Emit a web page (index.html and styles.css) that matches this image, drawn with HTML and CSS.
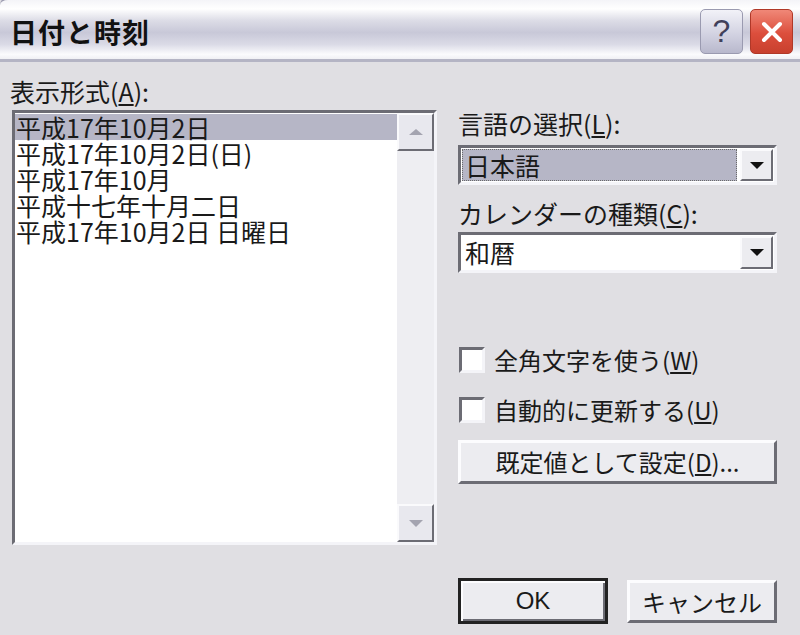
FILE: index.html
```html
<!DOCTYPE html>
<html lang="ja">
<head>
    <meta charset="UTF-8">
    <title>日付と時刻</title>
    <link rel="stylesheet" href="styles.css">
</head>
<body>
<div class="window">
    <div class="titlebar">
        <span class="title">日付と時刻</span>
        <div class="caption-buttons">
            <div class="cap-btn help">?</div>
            <div class="cap-btn close">
                <svg width="26" height="26" viewBox="0 0 26 26">
                    <path d="M5 5 L21 21 M21 5 L5 21" stroke="#fff" stroke-width="4" stroke-linecap="round"/>
                </svg>
            </div>
        </div>
    </div>

    <div class="content">
        <div class="left">
            <div class="label">表示形式(<u>A</u>):</div>
            <div class="listbox">
                <div class="items">
                    <div class="item selected">平成17年10月2日</div>
                    <div class="item">平成17年10月2日(日)</div>
                    <div class="item">平成17年10月</div>
                    <div class="item">平成十七年十月二日</div>
                    <div class="item">平成17年10月2日 日曜日</div>
                </div>
                <div class="scrollbar">
                    <div class="scroll-btn"><span class="arrow-up"></span></div>
                    <div class="scroll-track"></div>
                    <div class="scroll-btn"><span class="arrow-down grey"></span></div>
                </div>
            </div>
        </div>

        <div class="right">
            <div class="label lang-label">言語の選択(<u>L</u>):</div>
            <div class="combo lang-combo">
                <div class="combo-value focused">日本語</div>
                <div class="combo-btn"><span class="arrow-down"></span></div>
            </div>

            <div class="label cal-label">カレンダーの種類(<u>C</u>):</div>
            <div class="combo cal-combo">
                <div class="combo-value">和暦</div>
                <div class="combo-btn"><span class="arrow-down"></span></div>
            </div>

            <div class="check-row first">
                <span class="checkbox"></span>
                <span>全角文字を使う(<u>W</u>)</span>
            </div>
            <div class="check-row">
                <span class="checkbox"></span>
                <span>自動的に更新する(<u>U</u>)</span>
            </div>

            <button class="btn wide">既定値として設定(<u>D</u>)...</button>

            <div class="footer">
                <button class="btn ok">OK</button>
                <button class="btn cancel">キャンセル</button>
            </div>
        </div>
    </div>
</div>
</body>
</html>
```

FILE: styles.css
```css
body {
    margin: 0;
    background-color: #e0dfe3;
    font-family: "Noto Sans CJK JP", "Liberation Sans", sans-serif;
    color: #1a1a1a;
}

.window {
    width: 800px;
    height: 635px;
    overflow: hidden;
}

/* title bar, silver XP style */
.titlebar {
    height: 65px;
    margin-top: -3px;
    box-sizing: border-box;
    border-top: 3px solid #9c9cb0;
    border-bottom: 3px solid #b4b4c4;
    border-top-left-radius: 8px;
    background: linear-gradient(#f4f4f8 0%, #ffffff 15%, #dcdce6 35%, #c8c8d8 55%, #dadae6 75%, #fbfbfd 92%, #f0f0f4 100%);
    display: flex;
    align-items: center;
    justify-content: space-between;
}

.title {
    font-size: 27px;
    font-weight: bold;
    margin-left: 10px;
    margin-top: 4px;
    letter-spacing: 1px;
    color: #111;
}

.caption-buttons {
    display: flex;
    gap: 7px;
    margin-right: 7px;
    margin-top: 4px;
}

.cap-btn {
    width: 43px;
    height: 45px;
    border-radius: 5px;
    box-sizing: border-box;
    display: flex;
    align-items: center;
    justify-content: center;
}

.help {
    background: linear-gradient(#f2f2f8, #d0d0e0 60%, #b8b8cc);
    border: 1px solid #9a9ab0;
    font-size: 32px;
    color: #40405a;
    font-family: "Liberation Sans", sans-serif;
}

.close {
    background: linear-gradient(#f08878, #dc4e3c 55%, #c8402e);
    border: 1px solid #b03828;
}

/* dialog body */
.content {
    display: flex;
    padding: 14px 0 0 10px;
}

.left {
    width: 427px;
}

.label {
    font-size: 25px;
    line-height: 30px;
    white-space: nowrap;
}

.listbox {
    margin: 4px 0 0 2px;
    width: 425px;
    height: 435px;
    box-sizing: border-box;
    border: 3px solid;
    border-color: #6c6c74 #f4f4f8 #f4f4f8 #6c6c74;
    background: #fff;
    display: flex;
}

.items {
    flex: 1;
    padding-top: 1px;
}

.item {
    font-size: 25px;
    line-height: 26px;
    height: 26px;
    padding-left: 1px;
    white-space: nowrap;
}

.item.selected {
    background-color: #b6b6c6;
}

.scrollbar {
    width: 37px;
    display: flex;
    flex-direction: column;
    background: #eeeef2;
}

.scroll-track {
    flex: 1;
}

.scroll-btn {
    height: 38px;
    box-sizing: border-box;
    border: 2px solid;
    border-color: #fafafc #6c6c74 #6c6c74 #fafafc;
    background: #e8e8ee;
    display: flex;
    align-items: center;
    justify-content: center;
}

.arrow-up {
    width: 0;
    height: 0;
    border-left: 7px solid transparent;
    border-right: 7px solid transparent;
    border-bottom: 6px solid #a4a4b0;
}

.arrow-down {
    width: 0;
    height: 0;
    border-left: 7px solid transparent;
    border-right: 7px solid transparent;
    border-top: 7px solid #111;
}

.arrow-down.grey {
    border-top-color: #a4a4b0;
}

.right {
    margin-left: 21px;
    width: 319px;
    padding-top: 32px;
}

.combo {
    height: 40px;
    box-sizing: border-box;
    border: 3px solid;
    border-color: #6c6c74 #f4f4f8 #f4f4f8 #6c6c74;
    background: #fff;
    display: flex;
    align-items: stretch;
    padding: 1px;
}

.lang-combo {
    margin-top: 7px;
}

.cal-label {
    margin-top: 13px;
}

.cal-combo {
    margin-top: 4px;
    height: 41px;
}

.combo-value {
    flex: 1;
    font-size: 25px;
    line-height: 32px;
    padding-left: 3px;
    margin-right: 3px;
}

.combo-value.focused {
    background-color: #b6b6c6;
    outline: 1px dotted #6a6a6a;
    outline-offset: -1px;
}

.combo-btn {
    width: 33px;
    box-sizing: border-box;
    border: 2px solid;
    border-color: #fafafc #6c6c74 #6c6c74 #fafafc;
    background: #ececf0;
    display: flex;
    align-items: center;
    justify-content: center;
}

.check-row {
    display: flex;
    align-items: center;
    gap: 9px;
    font-size: 24px;
    line-height: 30px;
    margin-top: 20px;
    padding-left: 1px;
}

.check-row.first {
    margin-top: 72px;
}

.checkbox {
    width: 26px;
    height: 26px;
    box-sizing: border-box;
    border: 3px solid;
    border-color: #6c6c74 #f4f4f8 #f4f4f8 #6c6c74;
    background: #fff;
}

.btn {
    font-family: "Noto Sans CJK JP", "Liberation Sans", sans-serif;
    font-size: 24px;
    color: #1a1a1a;
    background: #ececf0;
    border: 3px solid;
    border-color: #fcfcfe #6c6c74 #6c6c74 #fcfcfe;
    box-sizing: border-box;
    padding: 0;
}

.wide {
    display: block;
    width: 319px;
    height: 44px;
    margin-top: 15px;
    line-height: 36px;
}

.footer {
    display: flex;
    justify-content: space-between;
    margin-top: 94px;
}

.ok {
    width: 150px;
    height: 46px;
    border: 3px solid #222;
    box-shadow: inset 2px 2px 0 #fcfcfe, inset -2px -2px 0 #6c6c74;
    font-family: "Liberation Sans", sans-serif;
}

.cancel {
    width: 150px;
    height: 43px;
    margin-top: 2px;
}
```
